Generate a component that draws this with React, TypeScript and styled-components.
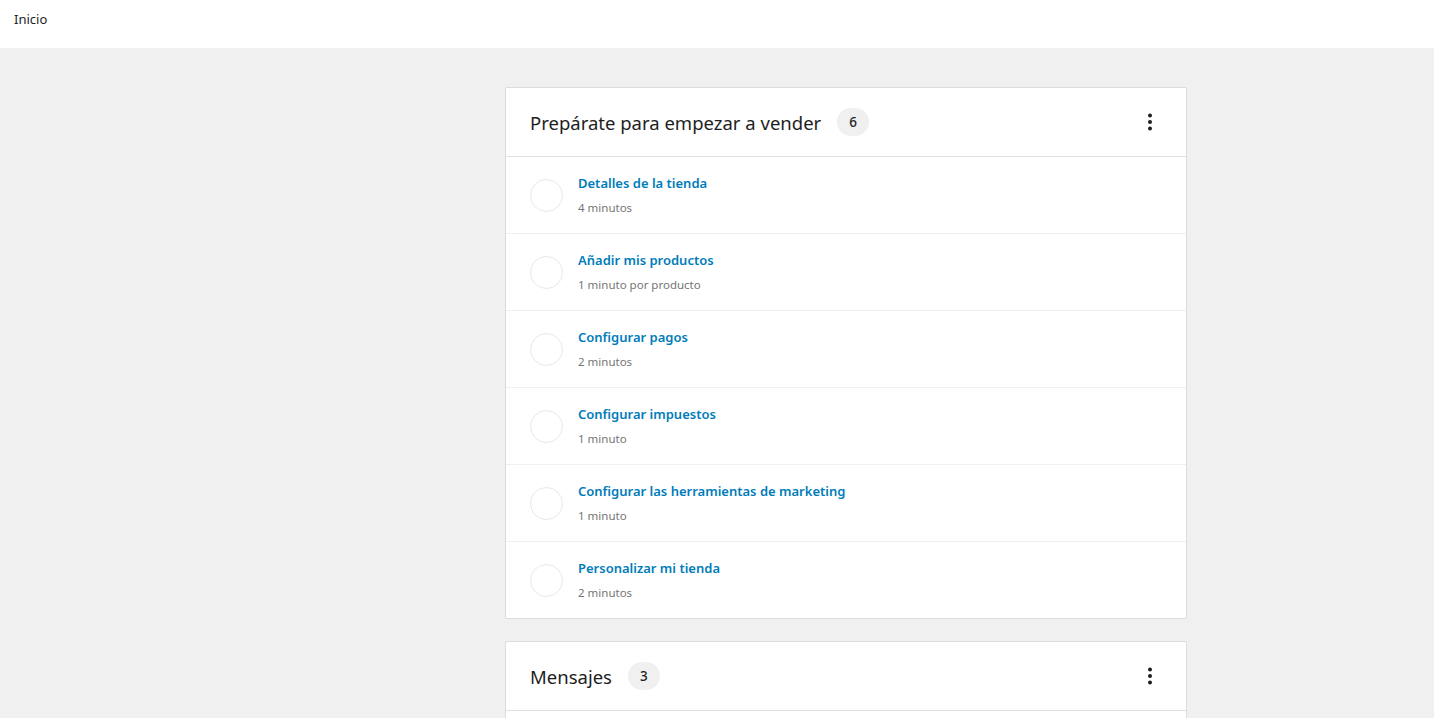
import styled, { createGlobalStyle } from 'styled-components';

const GlobalStyle = createGlobalStyle`
  body {
    margin: 0;
    background: #f0f0f0;
    font-family: "Noto Sans", "Open Sans", sans-serif;
    color: #1e1e1e;
  }
`;

const TASKS = [
  { title: 'Detalles de la tienda', time: '4 minutos' },
  { title: 'Añadir mis productos', time: '1 minuto por producto' },
  { title: 'Configurar pagos', time: '2 minutos' },
  { title: 'Configurar impuestos', time: '1 minuto' },
  { title: 'Configurar las herramientas de marketing', time: '1 minuto' },
  { title: 'Personalizar mi tienda', time: '2 minutos' },
];

function MoreIcon() {
  return (
    <svg width="24" height="24" viewBox="0 0 24 24" fill="#1e1e1e">
      <circle cx="12" cy="5.5" r="2" />
      <circle cx="12" cy="12" r="2" />
      <circle cx="12" cy="18.5" r="2" />
    </svg>
  );
}

export default function App() {
  return (
    <>
      <GlobalStyle />
      <Header>
        <PageTitle>Inicio</PageTitle>
      </Header>
      <Body>
        <Main>
          <Card>
            <CardHeader>
              <CardTitle>Prepárate para empezar a vender</CardTitle>
              <Badge>6</Badge>
              <MenuButton aria-label="Opciones">
                <MoreIcon />
              </MenuButton>
            </CardHeader>
            {TASKS.map((task) => (
              <TaskRow key={task.title}>
                <Check />
                <TaskText>
                  <TaskTitle>{task.title}</TaskTitle>
                  <TaskTime>{task.time}</TaskTime>
                </TaskText>
              </TaskRow>
            ))}
          </Card>
          <Card>
            <CardHeader>
              <CardTitle>Mensajes</CardTitle>
              <Badge>3</Badge>
              <MenuButton aria-label="Opciones">
                <MoreIcon />
              </MenuButton>
            </CardHeader>
            <EmptyRow />
          </Card>
        </Main>
      </Body>
    </>
  );
}

const Header = styled.header`
  height: 48px;
  background: #fff;
  display: flex;
  align-items: flex-start;
  padding: 10px 14px 0;
  box-sizing: border-box;
`;

const PageTitle = styled.h1`
  margin: 0;
  font-size: 13px;
  font-weight: 400;
  color: #1e1e1e;
`;

const Body = styled.div`
  padding-left: 258px;
`;

const Main = styled.main`
  width: 682px;
  margin: 39px auto 0;
  display: flex;
  flex-direction: column;
  gap: 22px;
`;

const Card = styled.section`
  background: #fff;
  border: 1px solid #dcdcde;
  border-radius: 2px;
`;

const CardHeader = styled.div`
  height: 68px;
  display: flex;
  align-items: center;
  padding: 0 24px;
  gap: 16px;
  border-bottom: 1px solid #e0e0e0;
`;

const CardTitle = styled.h2`
  margin: 0;
  font-size: 18.5px;
  font-weight: 400;
  color: #1e1e1e;
`;

const Badge = styled.span`
  min-width: 32px;
  height: 28px;
  padding: 0 8px;
  box-sizing: border-box;
  border-radius: 14px;
  background: #f0f0f0;
  display: inline-flex;
  align-items: center;
  justify-content: center;
  font-size: 13.5px;
  font-weight: 500;
  color: #1e1e1e;
`;

const MenuButton = styled.button`
  margin-left: auto;
  margin-right: 0;
  border: none;
  background: none;
  padding: 0;
  display: flex;
  cursor: pointer;
`;

const TaskRow = styled.div`
  height: 76px;
  display: flex;
  align-items: center;
  gap: 15px;
  padding: 0 24px;
  border-bottom: 1px solid #f0f0f0;
  &:last-child {
    border-bottom: none;
  }
`;

const Check = styled.span`
  width: 31px;
  height: 31px;
  border-radius: 50%;
  border: 1px solid #e8e8e8;
  flex-shrink: 0;
`;

const TaskText = styled.div`
  display: flex;
  flex-direction: column;
  gap: 8px;
  margin-top: -1px;
`;

const TaskTitle = styled.a`
  font-size: 13px;
  font-weight: 600;
  color: #007cba;
  text-decoration: none;
`;

const TaskTime = styled.span`
  font-size: 11.5px;
  color: #757575;
`;

const EmptyRow = styled.div`
  height: 40px;
`;
